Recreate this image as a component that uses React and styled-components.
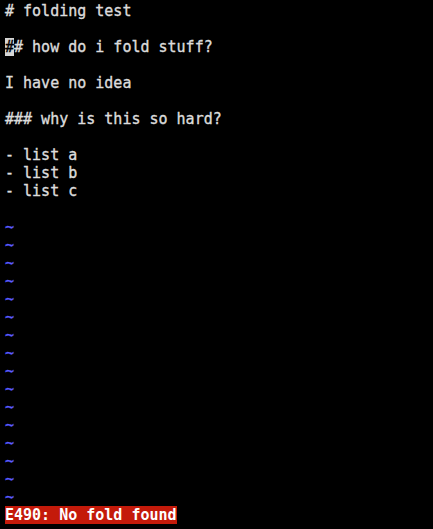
import React from 'react'
import styled, { createGlobalStyle } from 'styled-components'

const Global = createGlobalStyle`
  html, body {
    margin: 0;
    padding: 0;
    background: #000;
  }
`

// the terminal window
const Screen = styled.div`
  width: 433px;
  height: 529px;
  box-sizing: border-box;
  padding: 2px 5px 0;
  background: #000;
  font-family: "DejaVu Sans Mono", "Liberation Mono", monospace;
  font-size: 15px;
  color: #dcdcdc;
  -webkit-text-stroke: 0.35px #dcdcdc;
  overflow: hidden;
`

const Line = styled.div`
  height: 18px;
  line-height: 18px;
  white-space: pre;
  color: ${p => (p.$tilde ? '#5c5cff' : 'inherit')};
  -webkit-text-stroke-color: ${p => (p.$tilde ? '#5c5cff' : 'inherit')};
`

const Cursor = styled.span`
  background: #d6d6d6;
  color: #000;
  -webkit-text-stroke-color: #000;
`

const ErrorMsg = styled.span`
  background: #c41a0a;
  color: #fff;
  font-weight: bold;
  -webkit-text-stroke: 0;
`

const lines = [
    '# folding test',
    '',
    null,
    '',
    'I have no idea',
    '',
    '### why is this so hard?',
    '',
    '- list a',
    '- list b',
    '- list c',
    '',
]

const App = () => {
    return (
        <>
        <Global />
        <Screen>
            {lines.map((l, i) =>
                l === null ? (
                    <Line key={i}><Cursor>#</Cursor># how do i fold stuff?</Line>
                ) : (
                    <Line key={i}>{l}</Line>
                )
            )}
            {Array.from({ length: 16 }).map((_, i) => (
                <Line key={'t' + i} $tilde>~</Line>
            ))}
            <Line><ErrorMsg>E490: No fold found</ErrorMsg></Line>
        </Screen>
        </>
    )
}

export default App
